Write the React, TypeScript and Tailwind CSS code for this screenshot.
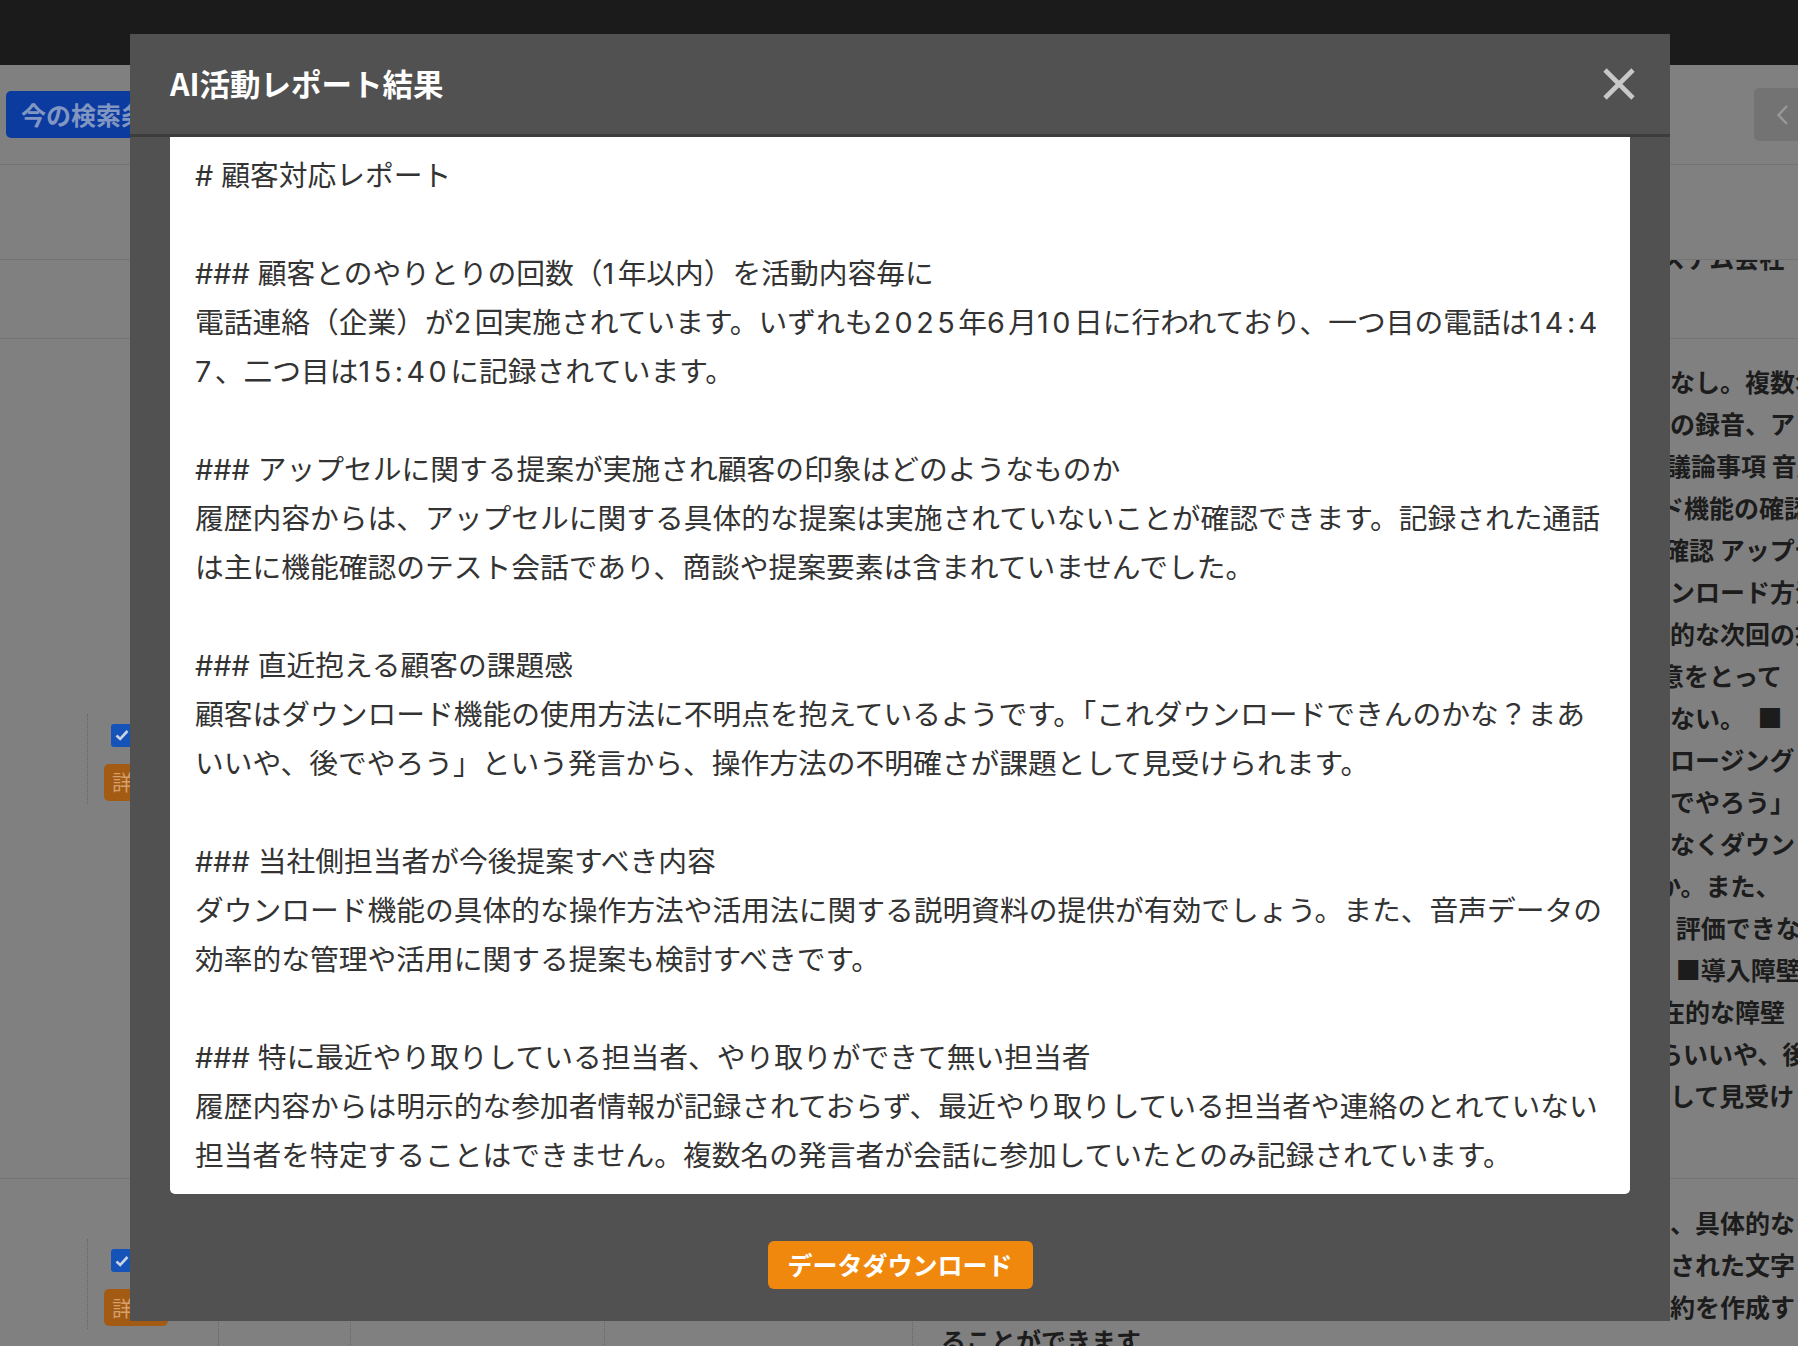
const reportLines = [
  "# 顧客対応レポート",
  "",
  "### 顧客とのやりとりの回数（1年以内）を活動内容毎に",
  "電話連絡（企業）が2回実施されています。いずれも2025年6月10日に行われており、一つ目の電話は14:4",
  "7、二つ目は15:40に記録されています。",
  "",
  "### アップセルに関する提案が実施され顧客の印象はどのようなものか",
  "履歴内容からは、アップセルに関する具体的な提案は実施されていないことが確認できます。記録された通話",
  "は主に機能確認のテスト会話であり、商談や提案要素は含まれていませんでした。",
  "",
  "### 直近抱える顧客の課題感",
  "顧客はダウンロード機能の使用方法に不明点を抱えているようです。「これダウンロードできんのかな？まあ",
  "いいや、後でやろう」という発言から、操作方法の不明確さが課題として見受けられます。",
  "",
  "### 当社側担当者が今後提案すべき内容",
  "ダウンロード機能の具体的な操作方法や活用法に関する説明資料の提供が有効でしょう。また、音声データの",
  "効率的な管理や活用に関する提案も検討すべきです。",
  "",
  "### 特に最近やり取りしている担当者、やり取りができて無い担当者",
  "履歴内容からは明示的な参加者情報が記録されておらず、最近やり取りしている担当者や連絡のとれていない",
  "担当者を特定することはできません。複数名の発言者が会話に参加していたとのみ記録されています。",
];

// text of the summary column behind the modal; the first glyph sits under the modal edge
const summaryLines = [
  { text: "がなし。複数名", cls: "" },
  { text: "話の録音、アッ", cls: "" },
  { text: "な議論事項 音声", cls: "-ml-[4px]" },
  { text: "ード機能の確認", cls: "-ml-[11px]" },
  { text: "の確認 アップセ", cls: "-ml-[6px]" },
  { text: "ウンロード方法", cls: "" },
  { text: "体的な次回の提", cls: "" },
  { text: "合意をとって", cls: "-ml-[11px]" },
  { text: "しない。　■", cls: "" },
  { text: "クロージング", cls: "" },
  { text: "後でやろう」", cls: "" },
  { text: "もなくダウン", cls: "" },
  { text: "のか。また、", cls: "-ml-[14px]" },
  { text: "。 評価できな", cls: "" },
  { text: "。 ■導入障壁", cls: "" },
  { text: "潜在的な障壁", cls: "-ml-[10px]" },
  { text: "あらいいや、後", cls: "-ml-[12px]" },
  { text: "にして見受け", cls: "" },
];

const summaryLines2 = ["る、具体的な", "成された文字", "要約を作成す"];

// digits are a bit wider in the original font
const withDigits = (line: string) =>
  line.split(/([0-9:]+)/).map((part, i) =>
    /^[0-9:]+$/.test(part) ? (
      <span key={i} className="tracking-[3.5px]">
        {part}
      </span>
    ) : (
      part
    )
  );

const RowMark = () => (
  <div className="flex flex-col items-start border-l border-dotted border-[#666666] pl-[16px] pt-[10px] pb-[3px]">
    <div className="ml-[7px] w-[21px] h-[23px] rounded-[3px] bg-[#1553b8] flex items-center justify-center">
      <svg width="14" height="12" viewBox="0 0 14 12" fill="none">
        <path d="M1.5 6.5 L5.2 10 L12.5 2" stroke="#c9d3e6" strokeWidth="2.6" />
      </svg>
    </div>
    <div className="mt-[17px] w-[64px] h-[37px] rounded-[5px] bg-[#a35a12] flex items-center pl-[8px] text-[21px] text-[#d6a06c]">
      詳細
    </div>
  </div>
);

export default function App() {
  return (
    <div className="relative w-[1798px] h-[1346px] overflow-hidden bg-[#808080] font-['Noto_Sans_CJK_JP',sans-serif]">
      {/* page behind the overlay */}
      <div className="flex flex-col">
        <div className="h-[65px] bg-[#1b1b1b]" />

        <div className="h-[100px] flex items-center justify-between border-b border-[#747474] pl-[6px]">
          <div className="h-[47px] rounded-[5px] bg-[#0c3ba0] px-[15px] flex items-center text-[25px] font-bold text-[#8296c2] whitespace-nowrap">
            今の検索条件を保存
          </div>
          <div className="h-[53px] w-[44px] rounded-l-[5px] bg-[#737373] flex items-center pl-[22px]">
            <svg width="13" height="22" viewBox="0 0 13 22" fill="none">
              <path d="M11 2 L2.5 11 L11 20" stroke="#989898" strokeWidth="2.4" />
            </svg>
          </div>
        </div>

        <div className="h-[95px] border-b border-[#747474]" />

        <div className="h-[79px] flex border-b border-[#747474]">
          <div className="w-[1645px] shrink-0" />
          <div className="flex-1 min-w-0 overflow-hidden">
            <p className="-mt-[24px] -ml-[10px] whitespace-nowrap text-[25px] leading-[42px] font-bold text-[#1c1c1c]">
              システム会社
            </p>
          </div>
        </div>

        <div className="h-[840px] flex border-b border-[#747474]">
          <div className="w-[1645px] shrink-0 flex items-center">
            <div className="ml-[87px]">
              <RowMark />
            </div>
          </div>
          <div className="flex-1 min-w-0 pt-[21px] text-[25px] leading-[42px] font-bold text-[#1c1c1c]">
            {summaryLines.map((l, i) => (
              <p key={i} className={`whitespace-pre ${l.cls}`}>
                {l.text}
              </p>
            ))}
          </div>
        </div>

        <div className="h-[300px] flex">
          <div className="w-[87px] shrink-0" />
          <div className="w-[131px] shrink-0 pt-[60px]">
            <RowMark />
          </div>
          <div className="w-[132px] shrink-0 border-l border-dotted border-[#666666]" />
          <div className="w-[254px] shrink-0 border-l border-dotted border-[#666666]" />
          <div className="w-[308px] shrink-0 border-l border-dotted border-[#666666]" />
          <div className="w-[733px] shrink-0 border-l border-dotted border-[#666666] pl-[28px] pt-[14px] text-[25px] leading-[42px] font-bold text-[#1c1c1c]">
            <p>音声データを確認し</p>
            <p>会話の内容を要約す</p>
            <p>ダウンロードするこ</p>
            <p>ることができます</p>
          </div>
          <div className="flex-1 min-w-0 pt-[22px] text-[25px] leading-[42px] font-bold text-[#1c1c1c]">
            {summaryLines2.map((t) => (
              <p key={t} className="whitespace-nowrap">
                {t}
              </p>
            ))}
          </div>
        </div>
      </div>

      {/* modal */}
      <div className="absolute left-[130px] top-[34px] w-[1540px] h-[1287px] bg-[#515151] flex flex-col">
        <div className="h-[103px] shrink-0 flex items-center justify-between pl-[40px] pr-[35px] border-b-[3px] border-[#3c3c3c]">
          <h2 className="text-[30.5px] font-bold text-white">AI活動レポート結果</h2>
          <svg width="32" height="32" viewBox="0 0 32 32" fill="none">
            <path d="M2 2 L30 30 M30 2 L2 30" stroke="#c8c8c8" strokeWidth="4.6" />
          </svg>
        </div>

        <div className="px-[40px]">
          <div className="h-[1057px] rounded-b-[5px] bg-white px-[25px] pt-[14px] text-[28.75px] leading-[49px] text-[#333333] overflow-hidden font-['Inter','Noto_Sans_CJK_JP',sans-serif]">
            {reportLines.map((line, i) => (
              <p key={i} className="whitespace-nowrap">
                {line ? withDigits(line) : "\u00A0"}
              </p>
            ))}
          </div>
        </div>

        <div className="flex justify-center pt-[47px]">
          <button className="h-[48px] w-[265px] rounded-[6px] bg-[#f0880e] text-[25px] font-bold text-white">
            データダウンロード
          </button>
        </div>
      </div>
    </div>
  );
}
